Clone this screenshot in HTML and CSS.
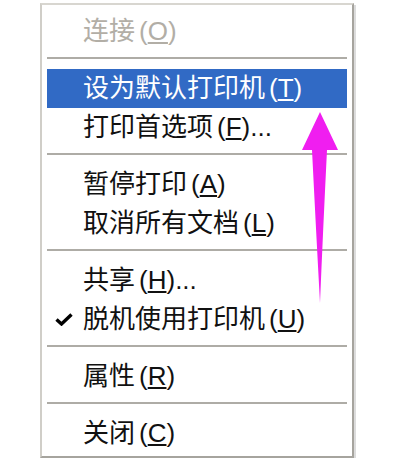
FILE: index.html
```html
<!DOCTYPE html>
<html lang="zh-CN">

<head>
    <meta charset="UTF-8">
    <meta name="viewport" content="width=device-width, initial-scale=1.0">
    <title>打印机菜单</title>
    <link rel="stylesheet" href="styles.css">
</head>

<body>

    <div class="menu">
        <div class="item disabled"><span class="gutter"></span><span class="label">连接<span class="key">(<u>O</u>)</span></span></div>
        <div class="sep"></div>
        <div class="item active"><span class="gutter"></span><span class="label">设为默认打印机<span class="key">(<u>T</u>)</span></span></div>
        <div class="item"><span class="gutter"></span><span class="label">打印首选项<span class="key">(<u>F</u>)...</span></span></div>
        <div class="sep"></div>
        <div class="item"><span class="gutter"></span><span class="label">暂停打印<span class="key">(<u>A</u>)</span></span></div>
        <div class="item"><span class="gutter"></span><span class="label">取消所有文档<span class="key">(<u>L</u>)</span></span></div>
        <div class="sep"></div>
        <div class="item"><span class="gutter"></span><span class="label">共享<span class="key">(<u>H</u>)...</span></span></div>
        <div class="item">
            <span class="gutter">
                <svg class="check" width="18" height="13" viewBox="0 0 18 13">
                    <path d="M1.5 6.5 L6.5 11 L16.5 1.5" fill="none" stroke="#000" stroke-width="3.4" stroke-linejoin="miter" />
                </svg>
            </span>
            <span class="label">脱机使用打印机<span class="key">(<u>U</u>)</span></span>
        </div>
        <div class="sep"></div>
        <div class="item"><span class="gutter"></span><span class="label">属性<span class="key">(<u>R</u>)</span></span></div>
        <div class="sep"></div>
        <div class="item"><span class="gutter"></span><span class="label">关闭<span class="key">(<u>C</u>)</span></span></div>
    </div>

    <!-- pink arrow drawn over the menu -->
    <svg class="arrow" width="400" height="475" viewBox="0 0 400 475">
        <path d="M320 112 L338 150 L327 150 Q323 230 320 303 Q316 230 312 150 L302 150 Z" fill="#f01ef0" />
    </svg>

</body>

</html>
```

FILE: styles.css
```css
body {
    background-color: white;
    margin: 0;
    padding: 0;
}

.menu {
    width: 310px;
    margin: 3px 0 0 40px;
    padding: 7px 0 3px 0;
    background-color: white;
    border-top: 2px solid #d8d6d0;
    border-left: 2px solid #d0cec8;
    border-right: 2px solid #a6a49e;
    border-bottom: 2px solid #a6a49e;
    box-shadow: 2px 2px 0 #dcdcdc;
    font-family: "Liberation Sans", "Noto Sans CJK SC", sans-serif;
    font-size: 26px;
    color: #111;
}

.item {
    display: flex;
    align-items: center;
    height: 39px;
    line-height: 39px;
    margin: 0 5px;
}

.gutter {
    display: flex;
    align-items: center;
    width: 36px;
    height: 39px;
    padding-left: 8px;
    box-sizing: border-box;
}

.label {
    white-space: nowrap;
}

.key {
    margin-left: 4px;
}

.key u {
    text-underline-offset: 2px;
}

.item.disabled {
    color: #b2aea6;
}

.item.active {
    background-color: #316ac5;
    color: white;
}

.sep {
    height: 2px;
    margin: 6px 5px 10px 5px;
    background-color: #aeaca6;
}

.arrow {
    position: absolute;
    top: 0;
    left: 0;
    pointer-events: none;
}
```
